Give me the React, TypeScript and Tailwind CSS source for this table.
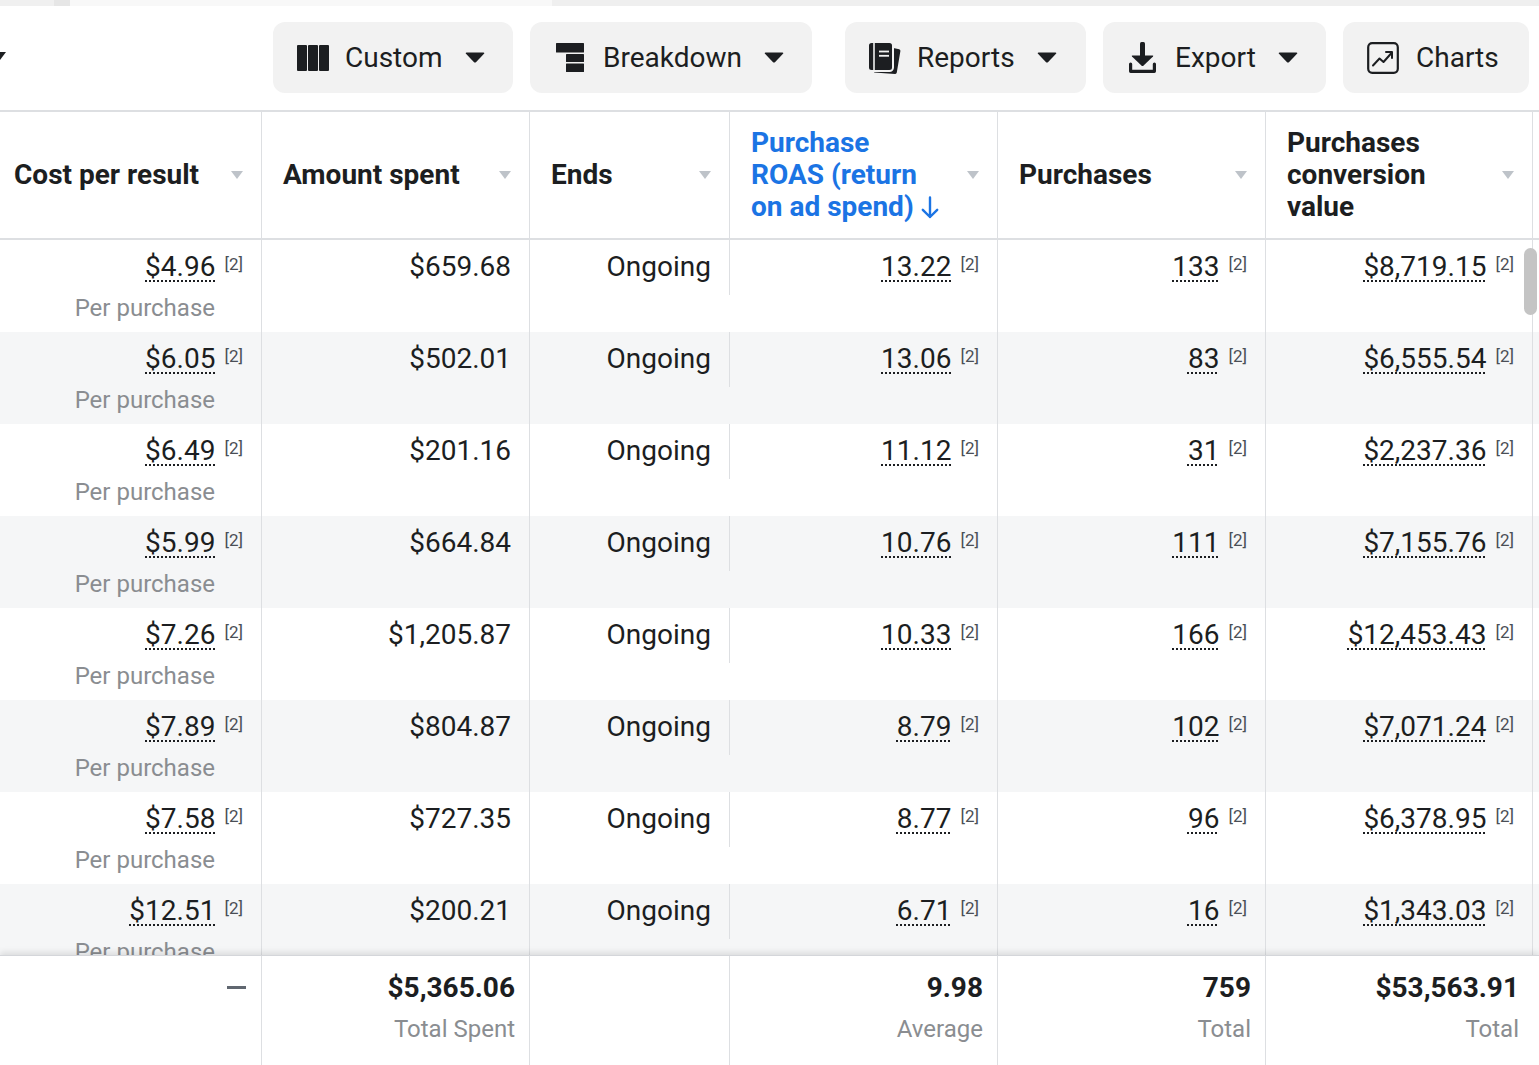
import React from "react";

type Row = { cpr: string; spent: string; roas: string; purchases: string; value: string };

const rows: Row[] = [
  { cpr: "$4.96", spent: "$659.68", roas: "13.22", purchases: "133", value: "$8,719.15" },
  { cpr: "$6.05", spent: "$502.01", roas: "13.06", purchases: "83", value: "$6,555.54" },
  { cpr: "$6.49", spent: "$201.16", roas: "11.12", purchases: "31", value: "$2,237.36" },
  { cpr: "$5.99", spent: "$664.84", roas: "10.76", purchases: "111", value: "$7,155.76" },
  { cpr: "$7.26", spent: "$1,205.87", roas: "10.33", purchases: "166", value: "$12,453.43" },
  { cpr: "$7.89", spent: "$804.87", roas: "8.79", purchases: "102", value: "$7,071.24" },
  { cpr: "$7.58", spent: "$727.35", roas: "8.77", purchases: "96", value: "$6,378.95" },
  { cpr: "$12.51", spent: "$200.21", roas: "6.71", purchases: "16", value: "$1,343.03" },
];

const GRID = "grid grid-cols-[262px_268px_200px_268px_268px_267px]";

function Caret() {
  return (
    <svg width="20" height="11" viewBox="0 0 20 11" className="shrink-0">
      <path d="M1.5 0.5 H18.5 Q20 0.5 19 1.8 L11.2 10 Q10 11.2 8.8 10 L1 1.8 Q0 0.5 1.5 0.5 Z" fill="#1c1e21" />
    </svg>
  );
}

function HeadCaret() {
  return (
    <svg width="12" height="8" viewBox="0 0 12 8" className="shrink-0">
      <path d="M0 0 H12 L6 8 Z" fill="#bec3c9" />
    </svg>
  );
}

function ColumnsIcon() {
  return (
    <svg width="32" height="26" viewBox="0 0 32 26" fill="#1c1e21">
      <rect x="0" y="0" width="10" height="26" rx="1" />
      <rect x="11" y="0" width="10" height="26" rx="1" />
      <rect x="22" y="0" width="10" height="26" rx="1" />
    </svg>
  );
}

function BreakdownIcon() {
  return (
    <svg width="28" height="29" viewBox="0 0 28 29" fill="#1c1e21">
      <rect x="0" y="0" width="28" height="9.5" rx="0.5" />
      <rect x="10" y="11" width="18" height="8" rx="0.5" />
      <rect x="10" y="20.5" width="18" height="8.5" rx="0.5" />
    </svg>
  );
}

function ReportsIcon() {
  return (
    <svg width="36" height="34" viewBox="0 0 36 34">
      <path d="M25 6.5 L33.2 8.3 Q34.6 8.7 34.4 10.1 L30.8 31.6 Q30.5 33 29.1 32.9 L8 31.4 Z" fill="#1c1e21" />
      <rect x="2" y="1" width="25" height="29" rx="3.5" fill="#1c1e21" stroke="#f2f2f2" strokeWidth="2" />
      <line x1="8" y1="1.5" x2="8" y2="29.5" stroke="#f2f2f2" strokeWidth="1.6" />
      <line x1="13" y1="10.5" x2="23" y2="10.5" stroke="#f2f2f2" strokeWidth="1.8" />
      <line x1="13" y1="14.8" x2="23" y2="14.8" stroke="#f2f2f2" strokeWidth="1.8" />
    </svg>
  );
}

function ExportIcon() {
  return (
    <svg width="27" height="31" viewBox="0 0 27 31" fill="#1c1e21">
      <rect x="11" y="0" width="5" height="16" rx="1.5" />
      <path d="M3.5 13.5 H23.5 Q24.8 13.5 24 14.6 L14.6 23.6 Q13.5 24.6 12.4 23.6 L3 14.6 Q2.2 13.5 3.5 13.5 Z" />
      <path d="M1.6 22 V29.3 H25.4 V22" fill="none" stroke="#1c1e21" strokeWidth="3.2" strokeLinecap="round" strokeLinejoin="round" />
    </svg>
  );
}

function ChartsIcon() {
  return (
    <svg width="32" height="32" viewBox="0 0 32 32" fill="none" stroke="#1c1e21">
      <rect x="1.2" y="1.2" width="29.6" height="29.6" rx="4" strokeWidth="2.2" />
      <path d="M6 23.5 L12.5 16.5 L16.5 20 L24.5 11" strokeWidth="2" strokeLinecap="round" strokeLinejoin="round" />
      <path d="M19 10 H25 V16" strokeWidth="2" strokeLinecap="round" strokeLinejoin="round" />
    </svg>
  );
}

function ToolButton({
  icon,
  label,
  width,
  pl,
  gap,
  caret = true,
  className = "",
}: {
  icon: React.ReactNode;
  label: string;
  width: string;
  pl: string;
  gap: string;
  caret?: boolean;
  className?: string;
}) {
  return (
    <button className={`flex h-[71px] items-center rounded-[12px] bg-[#f2f2f2] ${width} ${pl} ${className}`}>
      <span className="flex shrink-0 items-center">{icon}</span>
      <span className={`text-[28px] leading-none text-[#1c1e21] ${gap}`}>{label}</span>
      {caret && (
        <span className="ml-[22px] flex items-center">
          <Caret />
        </span>
      )}
    </button>
  );
}

function Num({ children }: { children: React.ReactNode }) {
  return (
    <span className="flex items-start gap-[9px]">
      <span className="underline decoration-dotted decoration-[2px] underline-offset-[4px] decoration-[#1c1e21]">{children}</span>
      <span className="mt-[6px] text-[17px] leading-none text-[#4b4f56]">[2]</span>
    </span>
  );
}

function HeadCell({ children, blue = false, first = false }: { children: React.ReactNode; blue?: boolean; first?: boolean }) {
  return (
    <div className={`flex items-center justify-between border-r border-[#dddfe2] pr-[18px] ${first ? "pl-[14px]" : "pl-[21px]"}`}>
      <div className={`text-[28px] font-bold leading-[32px] ${blue ? "text-[#1b74e4]" : "text-[#1c1e21]"}`}>{children}</div>
      <HeadCaret />
    </div>
  );
}

function BodyRow({ row, gray }: { row: Row; gray: boolean }) {
  const cell = "flex flex-col items-end pr-[18px] pt-[10px] border-r border-[#dddfe2] text-[28px] leading-[34px] text-[#1c1e21]";
  return (
    <div className={`${GRID} h-[92px] ${gray ? "bg-[#f5f6f7]" : "bg-white"}`}>
      <div className={cell}>
        <Num>{row.cpr}</Num>
        <span className="mr-[28px] mt-[9px] text-[24px] leading-[30px] text-[#8a8d91]">Per purchase</span>
      </div>
      <div className={cell}>
        <span>{row.spent}</span>
      </div>
      <div className="text-[28px] leading-[34px] text-[#1c1e21]">
        <div className="flex h-[55px] justify-end border-r border-[#dddfe2] pr-[18px] pt-[10px]">Ongoing</div>
      </div>
      <div className={cell}>
        <Num>{row.roas}</Num>
      </div>
      <div className={cell}>
        <Num>{row.purchases}</Num>
      </div>
      <div className={cell}>
        <Num>{row.value}</Num>
      </div>
    </div>
  );
}

function FootCell({ value, label, noBorder = false }: { value: string; label: string; noBorder?: boolean }) {
  return (
    <div className={`flex flex-col items-end pr-[14px] pt-[16px] ${noBorder ? "" : "border-r border-[#dddfe2]"}`}>
      <span className="text-[28px] font-bold leading-[32px] text-[#1c1e21]">{value}</span>
      <span className="mt-[10px] text-[24px] leading-[30px] text-[#8a8d91]">{label}</span>
    </div>
  );
}

export default function App() {
  return (
    <div className="relative h-[1065px] w-[1539px] overflow-hidden bg-white font-['Roboto',sans-serif]">
      {/* top scroll strip */}
      <div className="flex h-[6px]">
        <div className="w-[54px] bg-[#f0f0f0]" />
        <div className="w-[16px] bg-[#e6e6e6]" />
        <div className="w-[482px] bg-[#f8f8f8]" />
        <div className="flex-1 bg-[#efefef]" />
      </div>

      {/* toolbar */}
      <div className="relative flex h-[104px] items-start pt-[16px]">
        <div className="absolute left-0 top-[46px] h-[8px] w-[6px] overflow-hidden">
          <svg width="12" height="8" viewBox="0 0 12 8" className="-ml-[6px]">
            <path d="M0 0 H12 L6 8 Z" fill="#1c1e21" />
          </svg>
        </div>
        <div className="ml-[273px] flex gap-[17px]">
          <ToolButton icon={<ColumnsIcon />} label="Custom" width="w-[240px]" pl="pl-[24px]" gap="ml-[16px]" />
          <ToolButton icon={<BreakdownIcon />} label="Breakdown" width="w-[282px]" pl="pl-[26px]" gap="ml-[19px]" />
          <ToolButton icon={<ReportsIcon />} label="Reports" width="w-[241px]" pl="pl-[21px]" gap="ml-[15px]" className="ml-[16px]" />
          <ToolButton icon={<ExportIcon />} label="Export" width="w-[223px]" pl="pl-[26px]" gap="ml-[19px]" />
          <ToolButton icon={<ChartsIcon />} label="Charts" width="w-[186px]" pl="pl-[24px]" gap="ml-[17px]" caret={false} />
        </div>
      </div>

      {/* header */}
      <div className={`${GRID} h-[130px] border-y-2 border-[#dddfe2]`}>
        <HeadCell first>Cost per result</HeadCell>
        <HeadCell>Amount spent</HeadCell>
        <HeadCell>Ends</HeadCell>
        <HeadCell blue>
          Purchase
          <br />
          ROAS (return
          <br />
          <span className="inline-flex items-end">
            on ad spend)
            <svg width="18" height="23" viewBox="0 0 18 23" className="mb-[4px] ml-[7px]" fill="none" stroke="#1b74e4" strokeWidth="2.4" strokeLinecap="round" strokeLinejoin="round">
              <path d="M9 1.5 V21 M1.8 13.8 L9 21 L16.2 13.8" />
            </svg>
          </span>
        </HeadCell>
        <HeadCell>Purchases</HeadCell>
        <HeadCell>
          Purchases
          <br />
          conversion
          <br />
          value
        </HeadCell>
      </div>

      {/* body */}
      <div className="h-[715px] overflow-hidden">
        {rows.map((r, i) => (
          <BodyRow key={i} row={r} gray={i % 2 === 1} />
        ))}
      </div>

      {/* footer totals */}
      <div className={`${GRID} relative z-10 h-[110px] border-t border-[#d4d6da] bg-white shadow-[0_-3px_6px_rgba(0,0,0,0.10)]`}>
        <div className="flex justify-end border-r border-[#dddfe2] pr-[15px] pt-[30px]">
          <div className="h-[3px] w-[19px] bg-[#606770]" />
        </div>
        <FootCell value="$5,365.06" label="Total Spent" />
        <div className="border-r border-[#dddfe2]" />
        <FootCell value="9.98" label="Average" />
        <FootCell value="759" label="Total" />
        <FootCell value="$53,563.91" label="Total" noBorder />
      </div>

      {/* vertical scrollbar thumb */}
      <div className="absolute left-[1524px] top-[248px] h-[67px] w-[13px] rounded-full bg-[#c4c4c4]" />
    </div>
  );
}
